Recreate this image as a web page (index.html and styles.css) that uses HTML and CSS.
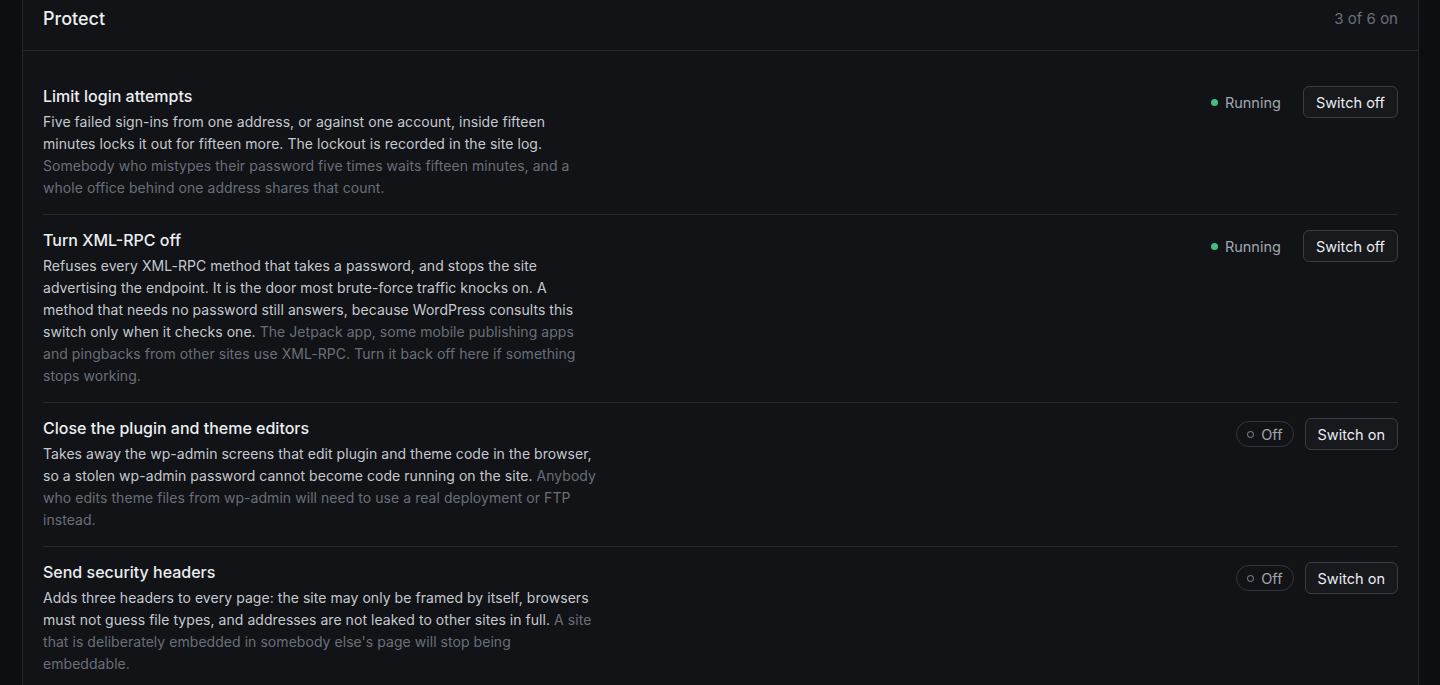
FILE: index.html
```html
<!DOCTYPE html>
<html lang="en">
<head>
<meta charset="utf-8">
<title>Protect</title>
<link rel="stylesheet" href="styles.css">
</head>
<body>
<main class="page">
  <section class="panel">
    <header class="panel-head">
      <h2 class="panel-title">Protect</h2>
      <span class="panel-count">3 of 6 on</span>
    </header>
    <div class="rows">
      <article class="row">
        <div class="row-text">
          <h3 class="row-title">Limit login attempts</h3>
          <p class="row-desc">Five failed sign-ins from one address, or against one account, inside fifteen minutes locks it out for fifteen more. The lockout is recorded in the site log. <span class="muted">Somebody who mistypes their password five times waits fifteen minutes, and a whole office behind one address shares that count.</span></p>
        </div>
        <div class="row-actions">
          <span class="status status-on"><span class="dot"></span>Running</span>
          <button class="btn" type="button">Switch off</button>
        </div>
      </article>
      <article class="row">
        <div class="row-text">
          <h3 class="row-title">Turn XML-RPC off</h3>
          <p class="row-desc">Refuses every XML-RPC method that takes a password, and stops the site advertising the endpoint. It is the door most brute-force traffic knocks on. A method that needs no password still answers, because WordPress consults this switch only when it checks one. <span class="muted">The Jetpack app, some mobile publishing apps and pingbacks from other sites use XML-RPC. Turn it back off here if something stops working.</span></p>
        </div>
        <div class="row-actions">
          <span class="status status-on"><span class="dot"></span>Running</span>
          <button class="btn" type="button">Switch off</button>
        </div>
      </article>
      <article class="row">
        <div class="row-text">
          <h3 class="row-title">Close the plugin and theme editors</h3>
          <p class="row-desc">Takes away the wp-admin screens that edit plugin and theme code in the browser, so a stolen wp-admin password cannot become code running on the site. <span class="muted">Anybody who edits theme files from wp-admin will need to use a real deployment or FTP instead.</span></p>
        </div>
        <div class="row-actions">
          <span class="status status-off"><span class="dot"></span>Off</span>
          <button class="btn" type="button">Switch on</button>
        </div>
      </article>
      <article class="row">
        <div class="row-text">
          <h3 class="row-title">Send security headers</h3>
          <p class="row-desc">Adds three headers to every page: the site may only be framed by itself, browsers must not guess file types, and addresses are not leaked to other sites in full. <span class="muted">A site that is deliberately embedded in somebody else's page will stop being embeddable.</span></p>
        </div>
        <div class="row-actions">
          <span class="status status-off"><span class="dot"></span>Off</span>
          <button class="btn" type="button">Switch on</button>
        </div>
      </article>
    </div>
  </section>
</main>
</body>
</html>
```
FILE: styles.css
```css
* { box-sizing: border-box; }
html, body { margin: 0; padding: 0; }
body {
  background: #0c0e11;
  color: #e6e8eb;
  font-family: "Inter", "Noto Sans", sans-serif;
  height: 685px;
  overflow: hidden;
}
.page {
  padding: 0 21px 0 22px;
}
.panel {
  background: #111317;
  border: 1px solid #23262b;
  border-top: none;
  min-height: 685px;
}
.panel-head {
  display: flex;
  align-items: center;
  justify-content: space-between;
  padding: 7px 20px 19px 20px;
  border-bottom: 1px solid #24272c;
}
.panel-title {
  margin: 0;
  font-size: 18px;
  font-weight: 500;
  line-height: 24px;
  color: #eceef1;
}
.panel-count {
  font-size: 15px;
  line-height: 24px;
  color: #6a6f77;
}
.rows {
  padding: 20px 20px 0 20px;
}
.row {
  display: flex;
  justify-content: space-between;
  align-items: flex-start;
  padding: 14px 0 15px;
  border-bottom: 1px solid #25282d;
}
.row:last-child { border-bottom: none; }
.row-text {
  width: 553px;
}
.row-title {
  margin: 0 0 4px;
  font-size: 16px;
  font-weight: 500;
  line-height: 22px;
  color: #eceef1;
}
.row-desc {
  margin: 0;
  font-size: 14px;
  letter-spacing: 0.05px;
  line-height: 22px;
  color: #c6c9ce;
}
.muted { color: #6a6f77; }
.row-actions {
  display: flex;
  align-items: center;
  gap: 11px;
  margin-top: 1px;
}
.status {
  display: inline-flex;
  align-items: center;
  gap: 7px;
  height: 26px;
  padding: 0 10px 0 10px;
  border-radius: 13px;
  border: 1px solid transparent;
  font-size: 14.5px;
  color: #a3a7ad;
}
.status .dot {
  width: 7px;
  height: 7px;
  border-radius: 50%;
}
.status-on .dot { background: #3fbf88; }
.status-off { border-color: #33363c; }
.status-off .dot { border: 1.5px solid #8d9198; }
.btn {
  height: 32px;
  padding: 0 12px;
  border: 1px solid #393c42;
  border-radius: 6px;
  background: #17191d;
  color: #eceef1;
  font-family: inherit;
  font-size: 14.5px;
}
```
